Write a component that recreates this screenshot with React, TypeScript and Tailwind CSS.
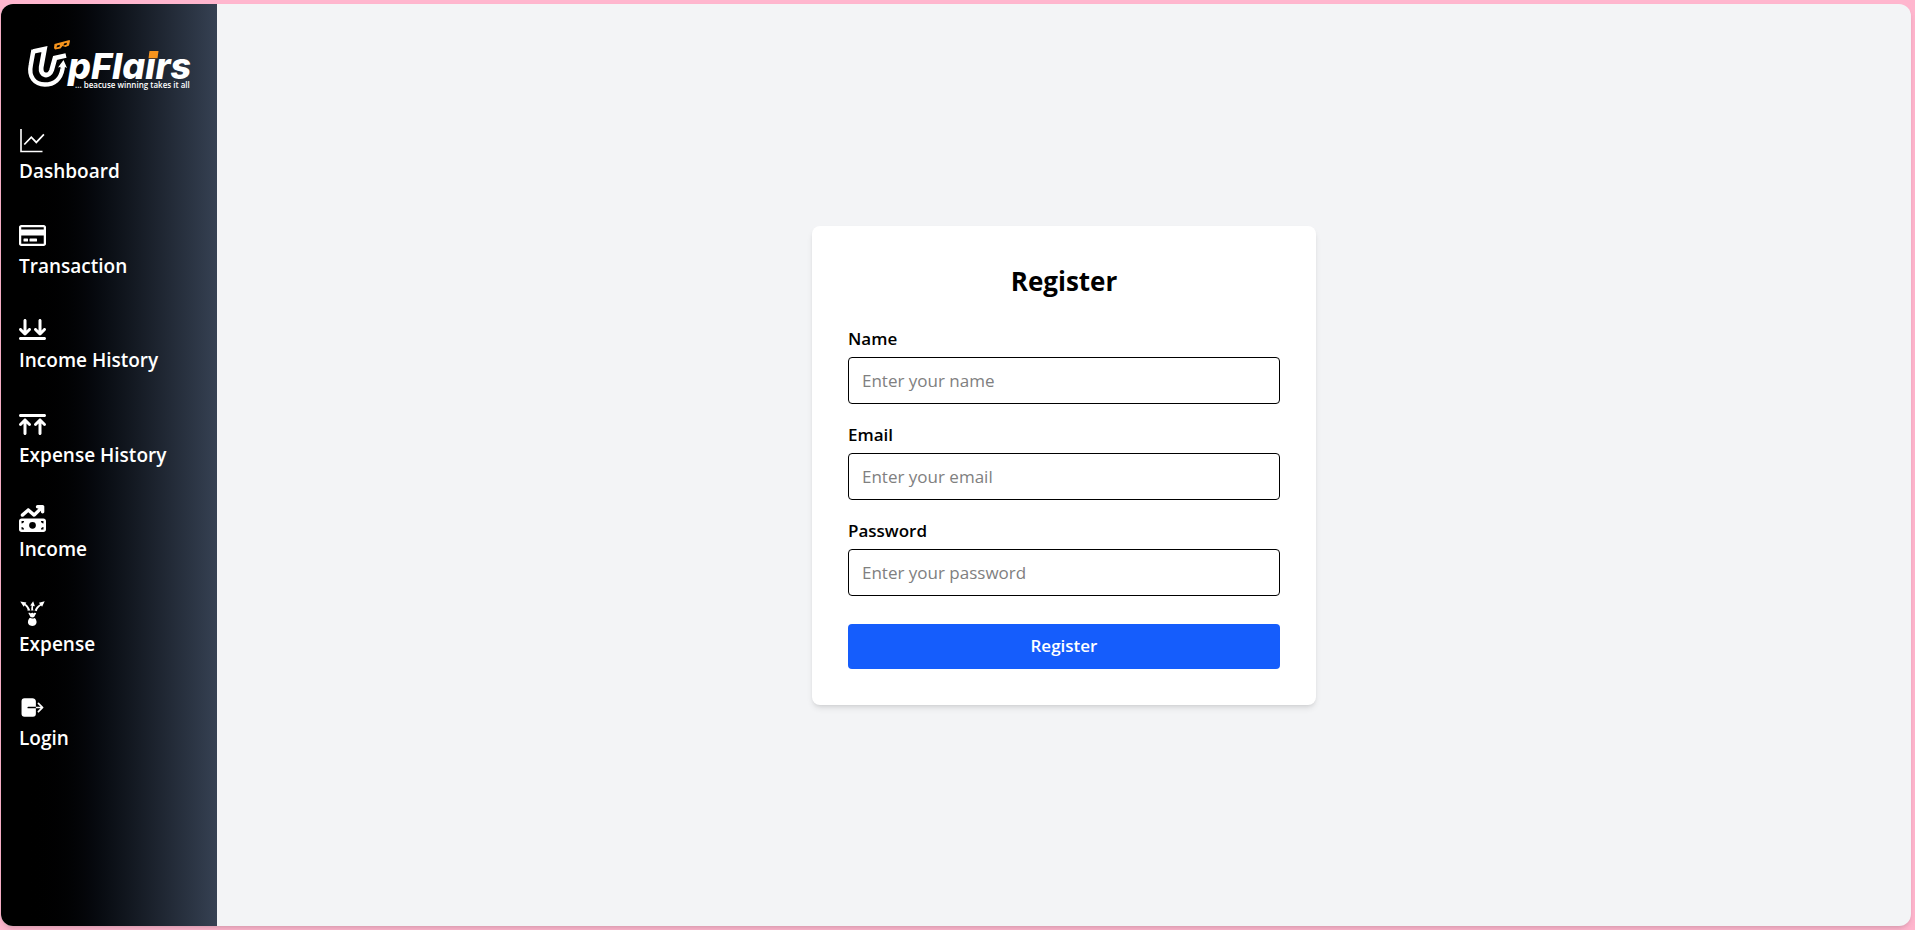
import type { ComponentType } from "react";
import { FaRegCreditCard } from "react-icons/fa";
import { FaArrowsDownToLine, FaArrowsUpToLine, FaMoneyBillTrendUp } from "react-icons/fa6";
import { GiExpense } from "react-icons/gi";
import { IoLogOut } from "react-icons/io5";

type IconProps = { className?: string };
type NavItem = { label: string; icon: ComponentType<IconProps> };

function LineChartIcon({ className }: IconProps) {
  return (
    <svg viewBox="0 0 27 27" className={className} fill="none" stroke="currentColor" aria-hidden="true">
      <path d="M2 2v22.500H23.500" strokeWidth="1.600" />
      <path d="m5.300 17.500 7-7.300 5 5.200 7.600-8" strokeWidth="1.700" />
    </svg>
  );
}

const navItems: NavItem[] = [
  { label: "Dashboard", icon: LineChartIcon },
  { label: "Transaction", icon: FaRegCreditCard },
  { label: "Income History", icon: FaArrowsDownToLine },
  { label: "Expense History", icon: FaArrowsUpToLine },
  { label: "Income", icon: FaMoneyBillTrendUp },
  { label: "Expense", icon: GiExpense },
  { label: "Login", icon: IoLogOut },
];

const fields = [
  { id: "name", label: "Name", type: "text", placeholder: "Enter your name" },
  { id: "email", label: "Email", type: "email", placeholder: "Enter your email" },
  { id: "password", label: "Password", type: "password", placeholder: "Enter your password" },
];

function Logo() {
  return (
    <svg viewBox="0 0 164 52" className="h-[52px] w-[164px] overflow-visible" role="img" aria-label="Upflairs">
      <g fill="none" stroke="#fff">
        <path
          d="M6 11.500 17.500 9 14.200 27c-1.200 9.500 8 10.500 10.500 3L28 18 39 15.500"
          strokeWidth="4.800"
        />
        <path d="M6.500 10 3.800 25c-2.500 12 4 19.500 14 19.500 9.500 0 16-5.500 17.700-15.500l.5-5" strokeWidth="4.400" />
      </g>
      <path fill="#fff" d="M31 27.500 36.500 20 40 28l-3-1.500-2 0z" />
      <path
        fill="#f7941d"
        fillRule="evenodd"
        d="M27.500 4 42.500 0l.5 1-1 4.500-3.500 1.500-3-1-2 2.500-5.500 1-1-1.500zM30 5.500l-.5 2 3-.8.5-2zM37 3.500l-.5 2 3-.8.5-2z"
      />
      <text x="41" y="39" fill="#fff" className="font-['Inter'] text-[36px] font-extrabold italic">
        pFlairs
      </text>
      <path fill="#f7941d" d="M122.500 11h9l-1 7.300h-9z" />
      <text x="48" y="48" fill="#fff" className="font-['Open_Sans'] text-[8px] font-semibold">
        ... beacuse winning takes it all
      </text>
    </svg>
  );
}

export default function App() {
  return (
    <div className="flex min-h-screen bg-[#ffb6ce] py-1 pr-1 pl-px font-['Open_Sans','Noto_Sans',sans-serif]">
      <div className="flex flex-1 overflow-hidden rounded-xl bg-gray-100 shadow-md">
        <aside className="w-[216px] shrink-0 bg-linear-to-r from-black from-10% to-gray-700 px-[18px] pt-9">
          <a href="#home" className="ml-2 block">
            <Logo />
          </a>
          <nav aria-label="Main" className="mt-[35px] flex h-[626px] flex-col justify-between">
            {navItems.map(({ label, icon: Icon }) => (
              <a key={label} href="#" className="block text-white">
                <Icon className="size-[27px]" />
                <span className="mt-0.5 block text-[19px] leading-[30px] font-semibold whitespace-nowrap">{label}</span>
              </a>
            ))}
          </nav>
        </aside>

        <main className="flex flex-1 items-center justify-center">
          <form className="w-full max-w-[504px] rounded-lg bg-white p-9 shadow-md">
            <h1 className="mb-[25px] text-center text-[26px] leading-[38px] font-bold">Register</h1>
            {fields.map((field) => (
              <div key={field.id} className="mb-[17px]">
                <label htmlFor={field.id} className="mb-[5px] block text-[17px] leading-[27px] font-semibold">
                  {field.label}
                </label>
                <input
                  id={field.id}
                  type={field.type}
                  placeholder={field.placeholder}
                  className="block h-[47px] w-full rounded-sm border border-black px-[13px] text-[17px] placeholder:text-[#808080]"
                />
              </div>
            ))}
            <button
              type="button"
              className="mt-7 block h-[45px] w-full rounded-sm bg-[#155dfc] text-[17px] font-semibold text-white"
            >
              Register
            </button>
          </form>
        </main>
      </div>
    </div>
  );
}
